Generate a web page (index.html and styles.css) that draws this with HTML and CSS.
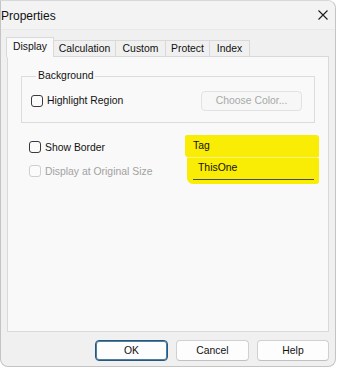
FILE: index.html
```html
<!DOCTYPE html>
<html lang="en">
<head>
  <meta charset="UTF-8">
  <title>Properties</title>
  <link rel="stylesheet" href="styles.css">
</head>
<body>
  <div class="window">
    <div class="titlebar">
      <span class="title">Properties</span>
      <svg class="close" width="10" height="10" viewBox="0 0 10 10">
        <path d="M0.5 0.5 L9.5 9.5 M9.5 0.5 L0.5 9.5" stroke="#1c1c1c" stroke-width="1.1" fill="none"/>
      </svg>
    </div>

    <div class="tabs">
      <div class="tab active" style="width:48px">Display</div>
      <div class="tab" style="width:63px">Calculation</div>
      <div class="tab" style="width:51px">Custom</div>
      <div class="tab" style="width:45px">Protect</div>
      <div class="tab" style="width:41px">Index</div>
    </div>

    <div class="panel">
      <fieldset class="group">
        <legend>Background</legend>
        <div class="group-row">
          <label class="check">
            <span class="box"></span>
            Highlight Region
          </label>
          <button class="btn disabled" disabled>Choose Color...</button>
        </div>
      </fieldset>

      <div class="lower">
        <div class="options">
          <label class="check">
            <span class="box"></span>
            Show Border
          </label>
          <label class="check off">
            <span class="box"></span>
            Display at Original Size
          </label>
        </div>
        <div class="marked">
          <div class="tag-label">Tag</div>
          <div class="tag-field">
            <div class="edit">ThisOne</div>
          </div>
        </div>
      </div>
    </div>

    <div class="actions">
      <button class="btn default">OK</button>
      <button class="btn">Cancel</button>
      <button class="btn">Help</button>
    </div>
  </div>
</body>
</html>
```

FILE: styles.css
```css
:root {
  --window-bg: #f0f0f0;
  --panel-bg: #f9f9f9;
  --line: #d9d9d9;
  --text: #111111;
  --text-off: #a2a2a2;
  --marker: #f9ec05;
  --font-ui: 'Liberation Sans', Arial, sans-serif;
}
* {
  box-sizing: border-box;
}
body {
  margin: 0;
  background: #ffffff;
  font-family: var(--font-ui);
  font-size: 10.4px;
  color: var(--text);
}
.window {
  width: 336px;
  height: 367px;
  background: var(--window-bg);
  border: 1px solid #c4c4c4;
  border-top-color: #d8d8d8;
  border-radius: 0 8px 8px 8px;
  display: flex;
  flex-direction: column;
}
.titlebar {
  height: 29px;
  display: flex;
  align-items: center;
  justify-content: space-between;
  padding: 0 7px 0 0;
  background: #f3f3f3;
  border-bottom: 1px solid #e9e9e9;
  border-radius: 0 8px 0 0;
}
.title {
  font-size: 12px;
  padding-top: 1px;
}
.close {
  display: block;
}

/* tab strip */
.tabs {
  display: flex;
  align-items: flex-end;
  height: 26px;
  padding-left: 5px;
}
.tab {
  height: 16px;
  line-height: 15px;
  text-align: center;
  border: 1px solid var(--line);
  border-bottom: none;
  background: var(--window-bg);
  margin-left: -1px;
  white-space: nowrap;
}
.tab:first-child {
  margin-left: 0;
}
.tab.active {
  height: 20px;
  line-height: 18px;
  background: var(--panel-bg);
  margin-bottom: -1px;
  position: relative;
  z-index: 1;
}

.panel {
  height: 276px;
  margin: 0 6px;
  background: var(--panel-bg);
  border: 1px solid var(--line);
}

/* group box */
.group {
  margin: 13px 13px 0 13px;
  padding: 0 12px 12px 9px;
  border: 1px solid #dcdcdc;
  min-width: 0;
}
.group legend {
  margin-left: 5px;
  padding: 0 2px;
  line-height: 12px;
}
.group-row {
  display: flex;
  align-items: center;
  justify-content: space-between;
  height: 19px;
  margin-top: 9px;
}

/* checkboxes */
.check {
  display: flex;
  align-items: center;
  gap: 4px;
  white-space: nowrap;
}
.box {
  width: 12px;
  height: 12px;
  border: 1px solid #3a3a3a;
  border-radius: 3px;
  background: #fbfbfb;
}
.check.off {
  color: var(--text-off);
}
.check.off .box {
  border-color: #cfcfcf;
}

/* buttons */
.btn {
  font-family: var(--font-ui);
  font-size: 10.4px;
  color: var(--text);
  background: #fdfdfd;
  border: 1px solid #d0d0d0;
  border-bottom-color: #c0c0c0;
  border-radius: 4px;
  width: 73px;
  height: 21px;
  padding: 0;
}
.btn.disabled {
  width: 101px;
  height: 20px;
  color: #a8a8a8;
  background: #f7f7f7;
  border-color: #e2e2e2;
}
.btn.default {
  border: 1px solid #27577c;
  box-shadow: inset 0 0 0 1px #4f7ea3;
}

/* lower options */
.lower {
  display: flex;
  margin-top: 12px;
  padding-left: 21px;
}
.options {
  width: 156px;
  padding-top: 6px;
  display: flex;
  flex-direction: column;
  gap: 12px;
}
.marked {
  width: 134px;
}
.tag-label {
  height: 22px;
  line-height: 22px;
  padding-left: 8px;
  background: var(--marker);
  border-radius: 2px 3px 1px 3px;
}
.tag-field {
  margin-left: 2px;
  padding: 0 5px 4px 6px;
  background: var(--marker);
  border-radius: 1px 2px 3px 6px;
  border-top: 1px solid #fbf27a;
}
.edit {
  height: 22px;
  line-height: 20px;
  padding-left: 5px;
  border-bottom: 1px solid #4a4a3a;
}

.actions {
  display: flex;
  justify-content: flex-end;
  gap: 8px;
  padding: 8px 6px 0 0;
}
.actions .btn:last-child {
  width: 72px;
}
```
